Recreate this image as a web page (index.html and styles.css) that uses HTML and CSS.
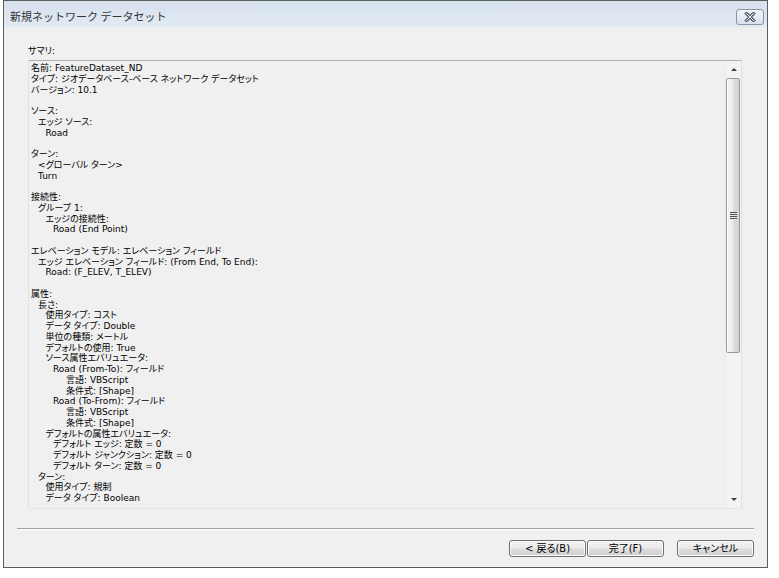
FILE: index.html
```html
<!DOCTYPE html>
<html lang="ja">
<head>
<meta charset="utf-8">
<title>新規ネットワーク データセット</title>
<link rel="stylesheet" href="styles.css">
</head>
<body>
<div class="window">
  <div class="titlebar">
    <span class="title">新規ネットワーク データセット</span>
    <div class="close">
      <svg width="12" height="10" viewBox="0 0 12 10">
        <path d="M2.5 1.5 L9.5 8.5 M9.5 1.5 L2.5 8.5" stroke="#5e6670" stroke-width="3.2" stroke-linecap="square" fill="none"/>
        <path d="M2.5 1.5 L9.5 8.5 M9.5 1.5 L2.5 8.5" stroke="#eef1f5" stroke-width="1" stroke-linecap="square" fill="none"/>
      </svg>
    </div>
  </div>
  <div class="body">
    <div class="label">サマリ:</div>
    <div class="textbox">
      <div class="text">
        <div class="ln">名前: FeatureDataset_ND</div>
        <div class="ln">タイプ: ジオデータベース-ベース ネットワーク データセット</div>
        <div class="ln">バージョン: 10.1</div>
        <div class="ln gap"></div>
        <div class="ln">ソース:</div>
        <div class="ln i1">エッジ ソース:</div>
        <div class="ln i2">Road</div>
        <div class="ln gap"></div>
        <div class="ln">ターン:</div>
        <div class="ln i1">&lt;グローバル ターン&gt;</div>
        <div class="ln i1">Turn</div>
        <div class="ln gap"></div>
        <div class="ln">接続性:</div>
        <div class="ln i1">グループ 1:</div>
        <div class="ln i2">エッジの接続性:</div>
        <div class="ln i3">Road (End Point)</div>
        <div class="ln gap"></div>
        <div class="ln">エレベーション モデル: エレベーション フィールド</div>
        <div class="ln i1">エッジ エレベーション フィールド: (From End, To End):</div>
        <div class="ln i2">Road: (F_ELEV, T_ELEV)</div>
        <div class="ln gap"></div>
        <div class="ln">属性:</div>
        <div class="ln i1">長さ:</div>
        <div class="ln i2">使用タイプ: コスト</div>
        <div class="ln i2">データ タイプ: Double</div>
        <div class="ln i2">単位の種類: メートル</div>
        <div class="ln i2">デフォルトの使用: True</div>
        <div class="ln i2">ソース属性エバリュエータ:</div>
        <div class="ln i3">Road (From-To): フィールド</div>
        <div class="ln i4">言語: VBScript</div>
        <div class="ln i4">条件式: [Shape]</div>
        <div class="ln i3">Road (To-From): フィールド</div>
        <div class="ln i4">言語: VBScript</div>
        <div class="ln i4">条件式: [Shape]</div>
        <div class="ln i2">デフォルトの属性エバリュエータ:</div>
        <div class="ln i3">デフォルト エッジ: 定数 = 0</div>
        <div class="ln i3">デフォルト ジャンクション: 定数 = 0</div>
        <div class="ln i3">デフォルト ターン: 定数 = 0</div>
        <div class="ln i1">ターン:</div>
        <div class="ln i2">使用タイプ: 規制</div>
        <div class="ln i2">データ タイプ: Boolean</div>
      </div>
      <div class="scrollbar">
        <div class="arrow"><span class="tri up"></span></div>
        <div class="thumb"><span class="grip"></span></div>
        <div class="track"></div>
        <div class="arrow"><span class="tri down"></span></div>
      </div>
    </div>
    <div class="separator"></div>
    <div class="footer">
      <button class="btn back">&lt; 戻る(B)</button>
      <button class="btn">完了(F)</button>
      <button class="btn cancel">キャンセル</button>
    </div>
  </div>
</div>
</body>
</html>
```
FILE: styles.css
```css
* { box-sizing: border-box; }

body {
  margin: 0;
  background: #ffffff;
  font-family: "DejaVu Sans", "Noto Sans CJK JP", sans-serif;
  font-size: 9px;
  font-feature-settings: "palt";
  color: #000;
}

.window {
  width: 765px;
  height: 568px;
  margin-left: 3px;
  border: 1px solid #5c5c5c;
  background: #f0f0f0;
  display: flex;
  flex-direction: column;
}

.titlebar {
  height: 26px;
  flex: none;
  display: flex;
  align-items: flex-start;
  background: linear-gradient(#d6e1ee, #e2eaf4);
  padding-left: 6px;
}

.title {
  font-family: "Noto Sans CJK JP", sans-serif;
  font-feature-settings: normal;
  font-size: 11px;
  line-height: 14px;
  margin-top: 8px;
  color: #333;
}

.close {
  margin-left: auto;
  margin-right: 3px;
  margin-top: 8px;
  width: 28px;
  height: 16px;
  border: 1px solid #8a96a6;
  border-radius: 3px;
  background: linear-gradient(#f1f4f8, #dbe2ec);
  display: flex;
  align-items: center;
  justify-content: center;
}

.close svg { display: block; }

.body {
  flex: 1;
  display: flex;
  flex-direction: column;
  padding: 18px 13px 10px 13px;
}

.label {
  height: 12px;
  line-height: 12px;
  margin: 0 0 3px 11px;
}

.textbox {
  height: 449px;
  margin: 0 12px 0 11px;
  border: 1px solid;
  border-color: #acaeb4 #dcdfe4 #e3e7ec #e0e2e7;
  display: flex;
  background: #f0f0f0;
}

.text {
  flex: 1;
  padding: 2px 0 0 2px;
  overflow: hidden;
  line-height: 10.75px;
  white-space: nowrap;
}

.ln { height: 10.75px; }
.i1 { padding-left: 7px; }
.i2 { padding-left: 14.5px; }
.i3 { padding-left: 22px; }
.i4 { padding-left: 35px; }

.scrollbar {
  width: 16px;
  flex: none;
  display: flex;
  flex-direction: column;
  background: #f3f3f3;
  border-left: 1px solid #ececec;
}

.arrow {
  height: 17px;
  flex: none;
  display: flex;
  align-items: center;
  justify-content: center;
}

.tri {
  width: 0;
  height: 0;
  border-left: 3px solid transparent;
  border-right: 3px solid transparent;
}
.tri.up { border-bottom: 3px solid #3c3c3c; }
.tri.down { border-top: 3px solid #3c3c3c; }

.thumb {
  height: 275px;
  flex: none;
  margin: 0 1px 0 0;
  border: 1px solid #9a9a9a;
  border-radius: 2px;
  background: linear-gradient(to right, #f4f4f4 0%, #ececec 45%, #dcdcdc 55%, #d2d2d2 100%);
  box-shadow: inset 1px 0 0 #ffffff;
  display: flex;
  align-items: center;
  justify-content: center;
}

.grip {
  width: 7px;
  height: 8px;
  background: repeating-linear-gradient(#4e4e4e 0 1px, #e8e8e8 1px 2px);
}

.track { flex: 1; }

.separator {
  margin-top: 19px;
  height: 2px;
  border-top: 1px solid #a0a0a0;
  border-bottom: 1px solid #ffffff;
}

.footer {
  margin-top: 10px;
  display: flex;
  justify-content: flex-end;
}

.btn {
  width: 77px;
  height: 17px;
  padding: 0;
  font: inherit;
  font-size: 10px;
  line-height: 15px;
  color: #000;
  border: 1px solid #707070;
  border-radius: 3px;
  background: linear-gradient(#f2f2f2 0%, #ebebeb 48%, #dddddd 52%, #cfcfcf 100%);
  box-shadow: inset 0 0 0 1px #fbfbfb;
}

.btn.back { margin-right: 1px; }
.btn.cancel { margin-left: 13px; }
```
